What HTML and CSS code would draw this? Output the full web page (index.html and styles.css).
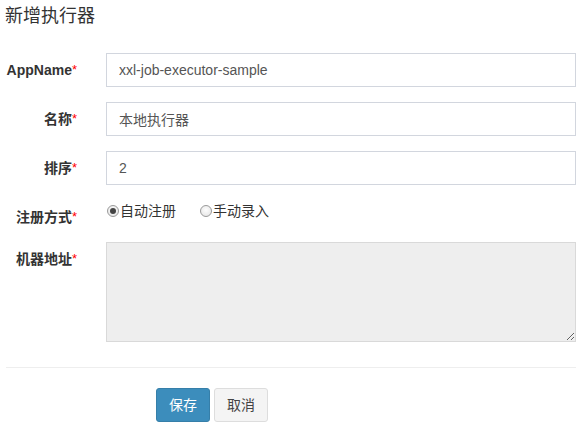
FILE: index.html
```html
<!DOCTYPE html>
<html lang="zh-CN">
<head>
<meta charset="utf-8">
<title>新增执行器</title>
<link rel="stylesheet" href="styles.css">
</head>
<body>
<div class="page">
  <h4 class="title">新增执行器</h4>
  <form class="form">
    <div class="row">
      <label class="lbl">AppName<span class="req">*</span></label>
      <input class="input" type="text" value="xxl-job-executor-sample">
    </div>
    <div class="row">
      <label class="lbl">名称<span class="req">*</span></label>
      <input class="input" type="text" value="本地执行器">
    </div>
    <div class="row">
      <label class="lbl">排序<span class="req">*</span></label>
      <input class="input" type="text" value="2">
    </div>
    <div class="row">
      <label class="lbl">注册方式<span class="req">*</span></label>
      <div class="radios">
        <label class="radio"><input type="radio" name="addressType" class="rd" checked>自动注册</label>
        <label class="radio"><input type="radio" name="addressType" class="rd">手动录入</label>
      </div>
    </div>
    <div class="row">
      <label class="lbl">机器地址<span class="req">*</span></label>
      <textarea class="ta" readonly></textarea>
    </div>
    <hr class="sep">
    <div class="actions">
      <button type="button" class="btn btn-primary">保存</button>
      <button type="button" class="btn btn-default">取消</button>
    </div>
  </form>
</div>
</body>
</html>
```
FILE: styles.css
```css
html, body {
  margin: 0;
  padding: 0;
  background: #fff;
}
body {
  font-family: "Liberation Sans", "Noto Sans CJK SC", sans-serif;
  font-size: 14px;
  line-height: 20px;
  color: #333;
}
.page {
  padding: 0 9px 0 6px;
}
.title {
  margin: 0 0 26px -1px;
  padding-top: 5px;
  font-size: 18px;
  line-height: 22px;
  font-weight: normal;
  color: #333;
}
.form {
  margin: 0;
}
.row {
  display: grid;
  grid-template-columns: 71px 1fr;
  column-gap: 29px;
  margin-bottom: 15px;
}
.lbl {
  display: flex;
  justify-content: flex-end;
  white-space: nowrap;
  padding-top: 7px;
  font-weight: bold;
  line-height: 20px;
  color: #333;
}
.req {
  color: #f00;
  font-weight: normal;
  font-size: 13px;
}
.input {
  box-sizing: border-box;
  height: 34px;
  width: 100%;
  margin: 0;
  padding: 6px 12px;
  border: 1px solid #d2d6de;
  border-radius: 0;
  font-family: inherit;
  font-size: 14px;
  line-height: 20px;
  color: #555;
  background: #fff;
  outline: none;
}
.radios {
  display: flex;
  align-items: center;
  gap: 23px;
  height: 20px;
  padding-top: 1px;
}
.radio {
  display: flex;
  align-items: center;
  color: #333;
  font-weight: normal;
  white-space: nowrap;
}
.rd {
  appearance: none;
  -webkit-appearance: none;
  box-sizing: border-box;
  width: 12px;
  height: 12px;
  margin: 0 1px 0 1px;
  border: 1px solid #9a9a9a;
  border-radius: 50%;
  background: radial-gradient(circle at 50% 40%, #fdfdfd 0%, #e2e2e2 100%);
  position: relative;
}
.rd:checked::after {
  content: "";
  position: absolute;
  left: 2px;
  top: 2px;
  width: 6px;
  height: 6px;
  border-radius: 50%;
  background: #444;
}
.ta {
  box-sizing: border-box;
  display: block;
  width: 100%;
  height: 100px;
  margin: 0;
  padding: 6px 12px;
  border: 1px solid #d9d9d9;
  border-radius: 0;
  background: #eee;
  font-family: inherit;
  font-size: 14px;
  color: #555;
  resize: both;
  outline: none;
}
.sep {
  margin: 25px 0 20px 0;
  border: 0;
  border-top: 1px solid #eee;
  height: 0;
}
.actions {
  display: flex;
  gap: 4px;
  padding-left: 150px;
}
.btn {
  box-sizing: border-box;
  height: 34px;
  padding: 6px 12px;
  border: 1px solid transparent;
  border-radius: 3px;
  font-family: inherit;
  font-size: 14px;
  line-height: 20px;
  cursor: pointer;
}
.btn-primary {
  background: #3c8dbc;
  border-color: #367fa9;
  color: #fff;
}
.btn-default {
  background: #f4f4f4;
  border-color: #ddd;
  color: #444;
}
```
